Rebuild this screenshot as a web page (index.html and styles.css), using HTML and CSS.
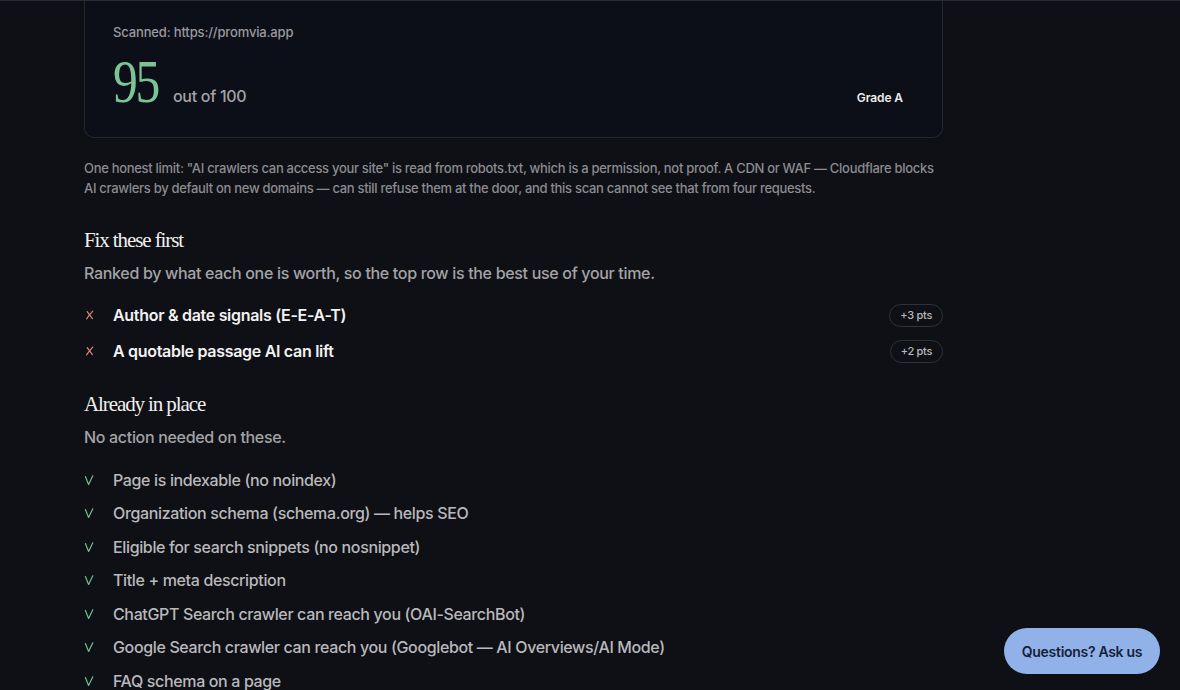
FILE: index.html
```html
<!DOCTYPE html>
<html lang="en">
<head>
<meta charset="utf-8">
<title>Scan result</title>
<link rel="stylesheet" href="styles.css">
</head>
<body>
<div class="topline"></div>
<main class="wrap">
  <section class="card">
    <div class="scanned">Scanned: https://promvia.app</div>
    <div class="score-row">
      <div class="score">
        <span class="num">95</span>
        <span class="outof">out of 100</span>
      </div>
      <span class="grade">Grade A</span>
    </div>
  </section>

  <p class="note">One honest limit: "AI crawlers can access your site" is read from robots.txt, which is a permission, not proof. A CDN or WAF — Cloudflare blocks AI crawlers by default on new domains — can still refuse them at the door, and this scan cannot see that from four requests.</p>

  <h2 class="sec-title">Fix these first</h2>
  <p class="sec-sub">Ranked by what each one is worth, so the top row is the best use of your time.</p>
  <ul class="fix-list">
    <li class="fix"><span class="mark"><svg class="ico bad" viewBox="0 0 10 10" width="10" height="10"><path d="M2.2 1.6 Q4.5 4.8 7.4 8.6 M7.8 1.2 Q4.6 4.6 1.6 8.8"/></svg></span><span class="fix-label">Author &amp; date signals (E-E-A-T)</span><span class="pill">+3 pts</span></li>
    <li class="fix"><span class="mark"><svg class="ico bad" viewBox="0 0 10 10" width="10" height="10"><path d="M2.2 1.6 Q4.5 4.8 7.4 8.6 M7.8 1.2 Q4.6 4.6 1.6 8.8"/></svg></span><span class="fix-label">A quotable passage AI can lift</span><span class="pill">+2 pts</span></li>
  </ul>

  <h2 class="sec-title sec-title-2">Already in place</h2>
  <p class="sec-sub">No action needed on these.</p>
  <ul class="ok-list">
    <li class="ok"><span class="mark"><svg class="ico good" viewBox="0 0 10 10" width="10" height="10"><path d="M1.4 1.6 L4.6 9.4 L8.8 0.8"/></svg></span>Page is indexable (no noindex)</li>
    <li class="ok"><span class="mark"><svg class="ico good" viewBox="0 0 10 10" width="10" height="10"><path d="M1.4 1.6 L4.6 9.4 L8.8 0.8"/></svg></span>Organization schema (schema.org) — helps SEO</li>
    <li class="ok"><span class="mark"><svg class="ico good" viewBox="0 0 10 10" width="10" height="10"><path d="M1.4 1.6 L4.6 9.4 L8.8 0.8"/></svg></span>Eligible for search snippets (no nosnippet)</li>
    <li class="ok"><span class="mark"><svg class="ico good" viewBox="0 0 10 10" width="10" height="10"><path d="M1.4 1.6 L4.6 9.4 L8.8 0.8"/></svg></span>Title + meta description</li>
    <li class="ok"><span class="mark"><svg class="ico good" viewBox="0 0 10 10" width="10" height="10"><path d="M1.4 1.6 L4.6 9.4 L8.8 0.8"/></svg></span>ChatGPT Search crawler can reach you (OAI-SearchBot)</li>
    <li class="ok"><span class="mark"><svg class="ico good" viewBox="0 0 10 10" width="10" height="10"><path d="M1.4 1.6 L4.6 9.4 L8.8 0.8"/></svg></span>Google Search crawler can reach you (Googlebot — AI Overviews/AI Mode)</li>
    <li class="ok"><span class="mark"><svg class="ico good" viewBox="0 0 10 10" width="10" height="10"><path d="M1.4 1.6 L4.6 9.4 L8.8 0.8"/></svg></span>FAQ schema on a page</li>
  </ul>
</main>
<button class="ask">Questions? Ask us</button>
</body>
</html>
```

FILE: styles.css
```css
* { box-sizing: border-box; }
html, body { margin: 0; padding: 0; }
body {
  background: #0f1015;
  color: #e8e8e8;
  font-family: Inter, "Noto Sans", "Liberation Sans", sans-serif;
  height: 690px;
  overflow: hidden;
}
.topline {
  height: 1px;
  background: #2a2c33;
}
.wrap {
  width: 859px;
  margin-left: 84px;
}
.card {
  background: #0c0f18;
  border: 1px solid #24272e;
  border-top: none;
  border-radius: 0 0 10px 10px;
  height: 137px;
  padding: 22px 39px 0 28px;
}
.scanned {
  font-size: 13px;
  font-weight: 500;
  color: #9a9a9e;
  line-height: 18px;
  letter-spacing: -0.15px;
}
.score-row {
  display: flex;
  align-items: baseline;
  justify-content: space-between;
  margin-top: 10px;
}
.score { display: flex; align-items: baseline; gap: 14px; }
.num {
  font-family: "Liberation Serif", serif;
  font-size: 62px;
  line-height: 60px;
  color: #7cc495;
  letter-spacing: -3px;
  display: inline-block;
  transform: scaleX(0.8);
  transform-origin: left;
  margin-right: -10px;
}
.outof {
  font-size: 16px;
  font-weight: 500;
  color: #a3a3a6;
  letter-spacing: -0.3px;
}
.grade {
  font-size: 12px;
  font-weight: 600;
  color: #ececec;
  letter-spacing: -0.1px;
}
.note {
  margin: 20px 0 0;
  font-size: 13px;
  line-height: 20px;
  font-weight: 500;
  color: #8b8b90;
  letter-spacing: -0.3px;
}
.sec-title {
  margin: 29px 0 0;
  font-family: "Liberation Serif", serif;
  font-weight: 400;
  font-size: 21px;
  line-height: 26px;
  color: #f0f0f0;
  letter-spacing: -1.1px;
}
.sec-title-2 { margin-top: 22px; }
.sec-sub {
  margin: 9px 0 0;
  font-size: 16px;
  line-height: 22px;
  font-weight: 500;
  color: #a3a3a6;
  letter-spacing: -0.32px;
}
ul { list-style: none; margin: 0; padding: 0; }
.fix-list { margin-top: 13px; }
.fix {
  display: flex;
  align-items: center;
  height: 36px;
  font-size: 16px;
  font-weight: 600;
  color: #f2f2f2;
  letter-spacing: -0.3px;
}
.mark {
  width: 29px;
  flex: none;
  display: flex;
  align-items: center;
}
.ico {
  fill: none;
  stroke-width: 1.2;
  stroke-linecap: round;
  stroke-linejoin: round;
}
.bad { stroke: #e0857a; margin-left: 1px; }
.good { stroke: #6fbf90; }
.fix-label { flex: 1; }
.pill {
  font-size: 11px;
  font-weight: 500;
  color: #b8b8bc;
  border: 1px solid #2e3138;
  border-radius: 12px;
  height: 23px;
  line-height: 21px;
  padding: 0 10px;
  letter-spacing: -0.3px;
}
.ok-list { margin-top: 15px; }
.ok {
  display: flex;
  align-items: center;
  height: 33.5px;
  font-size: 16px;
  font-weight: 500;
  color: #b9b9bc;
  letter-spacing: -0.36px;
}
.ask {
  position: fixed;
  left: 1004px;
  top: 628px;
  width: 156px;
  height: 46px;
  border: none;
  border-radius: 23px;
  background: #91b2e8;
  color: #16213a;
  font-family: Inter, "Noto Sans", sans-serif;
  font-size: 14px;
  font-weight: 600;
  letter-spacing: -0.3px;
  padding: 0;
}
```
